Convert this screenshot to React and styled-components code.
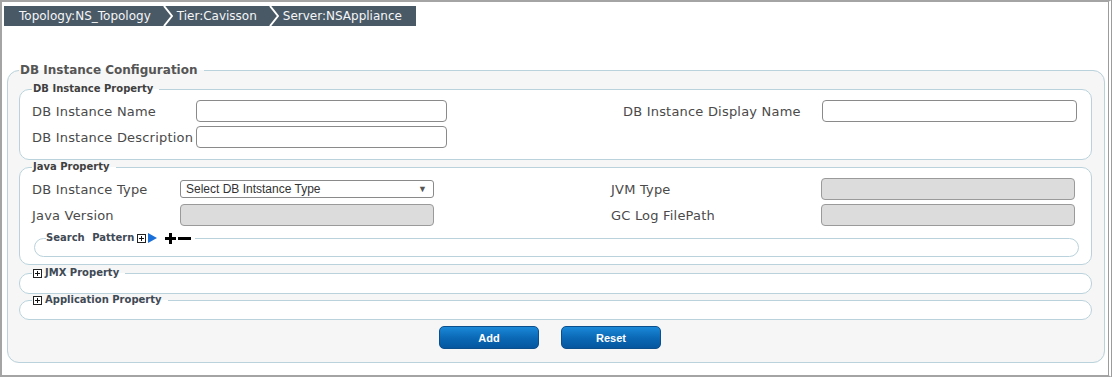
import React from 'react';
import styled, { createGlobalStyle } from 'styled-components';

const GlobalStyle = createGlobalStyle`
  body {
    margin: 0;
    font-family: "DejaVu Sans", Verdana, sans-serif;
    background: #fff;
  }
`;

const Page = styled.div`
  width: 1112px;
  height: 377px;
  box-sizing: border-box;
  border: 2px solid #a4a4a4;
  border-right: 4px double #9c9c9c;
  padding: 4px 0 0 2px;
  overflow: hidden;
`;

const Breadcrumb = styled.div`
  display: flex;
  width: fit-content;
  align-items: stretch;
  height: 20px;
  background: #4a5966;
  color: #f4f6f8;
  font-size: 12px;
  line-height: 20px;
`;

const Crumb = styled.span`
  padding: 0 ${p => (p.$last ? 14 : 12)}px 0 ${p => (p.$first ? 15 : 4)}px;
  white-space: nowrap;
`;

const Chevron = () => (
  <svg width="10" height="20" viewBox="0 0 10 20">
    <polyline points="1,0 9,10 1,20" fill="none" stroke="#fff" strokeWidth="2" />
  </svg>
);

const MainSet = styled.fieldset`
  margin: 36px 0 0 3px;
  width: 1098px;
  box-sizing: border-box;
  min-width: 0;
  padding: 1px 12px 13px 11px;
  border: 1px solid #b9d2db;
  border-radius: 12px;
  background: #f6f6f6;
`;

const MainLegend = styled.legend`
  padding: 0 6px 0 1px;
  font-size: 12px;
  font-weight: bold;
  line-height: 16px;
  color: #555;
`;

const GroupSet = styled.fieldset`
  margin: ${p => p.$gap}px 0 0 0;
  min-width: 0;
  padding: 5px 12px ${p => p.$bottom}px 12px;
  border: 1px solid #b9d2db;
  border-radius: 10px;
  background: #fff;
`;

const GroupLegend = styled.legend`
  padding: 0 6px 0 1px;
  font-size: 10px;
  font-weight: bold;
  line-height: 12px;
  color: #3f3f3f;
`;

const SubSet = styled.fieldset`
  margin: 6px 0 0 2px;
  min-width: 0;
  padding: 0 0 12px 11px;
  border: 1px solid #b9d2db;
  border-radius: 10px;
  background: #fff;
`;

const SubLegend = styled.legend`
  display: flex;
  align-items: center;
  gap: 2px;
  padding: 0 4px 0 0;
  font-size: 10px;
  font-weight: bold;
  line-height: 12px;
  color: #3f4a55;
  word-spacing: 4px;
`;

const CollapsedSet = styled.fieldset`
  margin: ${p => p.$gap}px 0 0 0;
  min-width: 0;
  padding: 0 0 ${p => p.$bottom}px 12px;
  border: 1px solid #b9d2db;
  border-radius: 10px;
  background: #fff;
`;

const CollapsedLegend = styled.legend`
  display: flex;
  align-items: center;
  gap: 3px;
  padding: 0 6px 0 1px;
  font-size: 10px;
  font-weight: bold;
  line-height: 10px;
  color: #3f4a55;
`;

const FieldGrid = styled.div`
  display: grid;
  grid-template-columns: ${p => p.$cols};
  grid-auto-rows: 22px;
  row-gap: 4px;
  align-items: center;
`;

const Label = styled.label`
  font-size: 13px;
  letter-spacing: 0.2px;
  color: #4a4a4a;
  white-space: nowrap;
`;

const TextInput = styled.input`
  box-sizing: border-box;
  width: 100%;
  height: 22px;
  margin: 0;
  border: 1px solid ${p => (p.disabled ? '#9a9a9a' : '#8a8a8a')};
  border-radius: 4px;
  background: ${p => (p.disabled ? '#dcdcdc' : '#fff')};
`;

const SelectBox = styled.div`
  box-sizing: border-box;
  display: flex;
  align-items: center;
  justify-content: space-between;
  width: 100%;
  height: 18px;
  padding: 0 6px 0 5px;
  border: 1px solid #8a8a8a;
  border-radius: 3px;
  background: #fff;
  font-family: "Liberation Sans", Arial, sans-serif;
  font-size: 12px;
  color: #333;
`;

const Arrow = styled.span`
  font-size: 9px;
  color: #555;
`;

const ButtonRow = styled.div`
  display: flex;
  justify-content: center;
  gap: 22px;
  margin-top: 6px;
  padding-right: 11px;
`;

const Button = styled.button`
  width: 100px;
  height: 23px;
  border: 1px solid #0b4f8c;
  border-radius: 5px;
  background: linear-gradient(#1a88d8, #0a67b4 55%, #05579f);
  color: #fff;
  font-family: "Liberation Sans", Arial, sans-serif;
  font-size: 11px;
  font-weight: bold;
  cursor: pointer;
`;

const IconGap = styled.span`
  display: inline-flex;
  margin-left: ${p => p.$left}px;
`;

const PlusBox = () => (
  <svg width="9" height="9" viewBox="0 0 9 9">
    <rect x="0.5" y="0.5" width="8" height="8" fill="#fff" stroke="#222" />
    <path d="M2 4.5h5M4.5 2v5" stroke="#111" strokeWidth="1" />
  </svg>
);

const PlayIcon = () => (
  <svg width="9" height="10" viewBox="0 0 9 10">
    <polygon points="0,0 9,5 0,10" fill="#1b6fd8" />
  </svg>
);

const AddIcon = () => (
  <svg width="11" height="11" viewBox="0 0 11 11">
    <path d="M0 5.5h11M5.5 0v11" stroke="#000" strokeWidth="3" />
  </svg>
);

const RemoveIcon = () => (
  <svg width="13" height="11" viewBox="0 0 13 11">
    <path d="M0 5.5h13" stroke="#000" strokeWidth="3" />
  </svg>
);

const App = () => (
  <>
    <GlobalStyle />
    <Page>
      <Breadcrumb>
        <Crumb $first>Topology:NS_Topology</Crumb>
        <Chevron />
        <Crumb>Tier:Cavisson</Crumb>
        <Chevron />
        <Crumb $last>Server:NSAppliance</Crumb>
      </Breadcrumb>

      <MainSet>
        <MainLegend>DB Instance Configuration</MainLegend>

        <GroupSet $gap={4} $bottom={11}>
          <GroupLegend>DB Instance Property</GroupLegend>
          <FieldGrid $cols="164px 251px 176px 199px 255px">
            <Label>DB Instance Name</Label>
            <TextInput />
            <span />
            <Label>DB Instance Display Name</Label>
            <TextInput />
            <Label>DB Instance Description</Label>
            <TextInput />
          </FieldGrid>
        </GroupSet>

        <GroupSet $gap={1} $bottom={7}>
          <GroupLegend>Java Property</GroupLegend>
          <FieldGrid $cols="148px 254px 177px 210px 254px">
            <Label>DB Instance Type</Label>
            <SelectBox>
              <span>Select DB Intstance Type</span>
              <Arrow>▼</Arrow>
            </SelectBox>
            <span />
            <Label>JVM Type</Label>
            <TextInput disabled />
            <Label>Java Version</Label>
            <TextInput disabled />
            <span />
            <Label>GC Log FilePath</Label>
            <TextInput disabled />
          </FieldGrid>
          <SubSet>
            <SubLegend>
              <span>Search Pattern</span>
              <IconGap $left={1}><PlusBox /></IconGap>
              <PlayIcon />
              <IconGap $left={6}><AddIcon /></IconGap>
              <RemoveIcon />
            </SubLegend>
          </SubSet>
        </GroupSet>

        <CollapsedSet $gap={3} $bottom={15}>
          <CollapsedLegend>
            <PlusBox />
            <span>JMX Property</span>
          </CollapsedLegend>
        </CollapsedSet>

        <CollapsedSet $gap={1} $bottom={14}>
          <CollapsedLegend>
            <PlusBox />
            <span>Application Property</span>
          </CollapsedLegend>
        </CollapsedSet>

        <ButtonRow>
          <Button>Add</Button>
          <Button>Reset</Button>
        </ButtonRow>
      </MainSet>
    </Page>
  </>
);

export default App;
